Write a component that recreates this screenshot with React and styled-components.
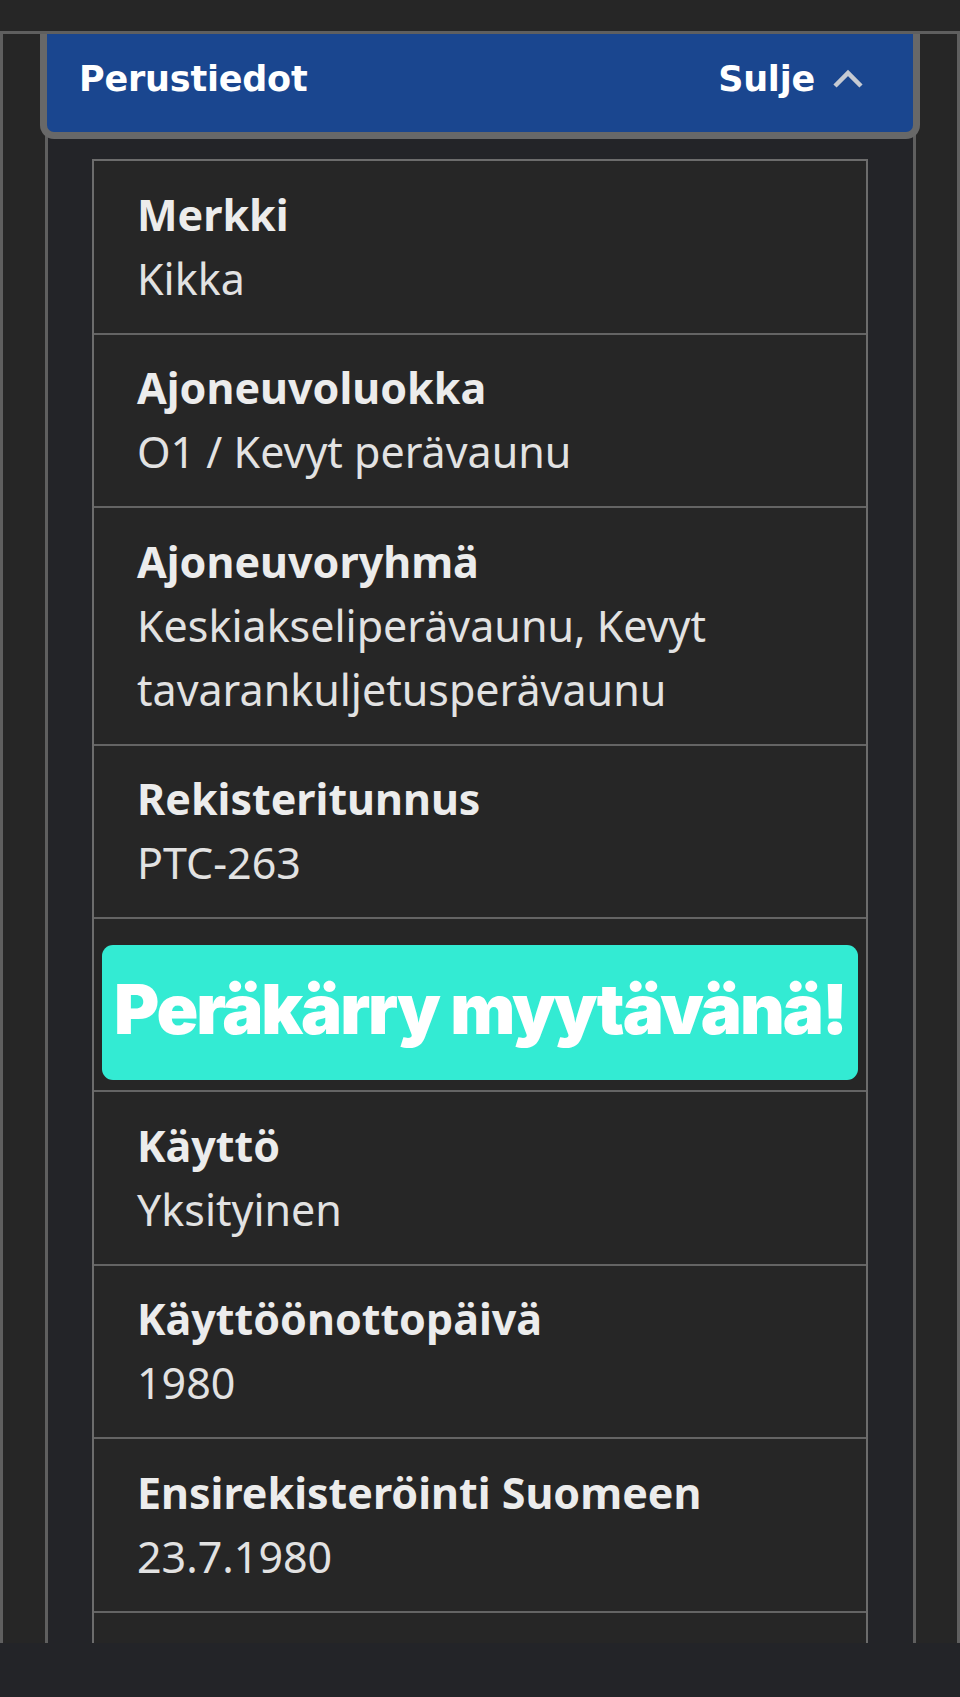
import React from 'react';
import styled, { createGlobalStyle } from 'styled-components';

const GlobalStyle = createGlobalStyle`
  html, body {
    margin: 0;
    padding: 0;
    background-color: #262626;
  }

  body {
    font-family: "Noto Sans", "Open Sans", sans-serif;
    height: 1697px;
    overflow: hidden;
  }
`;

const Page = styled.div`
  position: relative;
  height: 1697px;
  padding-top: 31px;
  box-sizing: border-box;
  overflow: hidden;
`;

const Frame = styled.div`
  border: 3px solid #5f5f5f;
  border-bottom: none;
  background-color: #262626;
  padding: 0 41px 0 42px;
  height: 1700px;
`;

const Column = styled.div`
  border-left: 3px solid #5f5f5f;
  border-right: 3px solid #5f5f5f;
  background-color: #232428;
  height: 100%;
  display: flex;
  flex-direction: column;
`;

const Header = styled.button`
  margin: 0 -7px 0 -8px;
  border: 7px solid #686868;
  border-top: none;
  border-radius: 0 0 14px 14px;
  background-color: #1a468f;
  height: 105px;
  padding: 0 49px 8px 32px;
  display: flex;
  align-items: center;
  justify-content: space-between;
  color: #ffffff;
  font-family: "DejaVu Sans", "Liberation Sans", sans-serif;
  font-weight: 700;
  font-size: 35px;
  letter-spacing: -0.2px;
  cursor: pointer;
`;

const HeaderTitle = styled.span``;

const Toggle = styled.span`
  display: flex;
  align-items: center;
  gap: 17px;
`;

const Table = styled.div`
  margin: 20px 45px 0 44px;
  border: 2px solid #6c6c6c;
  border-bottom: none;
  background-color: #262626;
`;

const Row = styled.div`
  border-bottom: 2px solid #646464;
  padding: ${({ $banner }) => ($banner ? '26px 8px 10px 8px' : '21.5px 43px 22px')};
  color: #e6e6e6;
  font-size: 43px;
  line-height: 64px;
`;

const Label = styled.div`
  font-weight: 700;
  color: #ececec;
`;

const Value = styled.div`
  font-weight: 400;
  color: #e2e2e2;
`;

const Banner = styled.div`
  height: 135px;
  border-radius: 11px;
  background-color: #33ebd3;
  color: #ffffff;
  display: flex;
  align-items: center;
  justify-content: center;
  font-family: "Inter", "Liberation Sans", sans-serif;
  font-weight: 900;
  font-size: 69px;
  letter-spacing: -2.1px;
  line-height: 1;
  padding-bottom: 6px;
  box-sizing: border-box;
`;

const BottomBar = styled.div`
  position: absolute;
  left: 0;
  right: 0;
  bottom: 0;
  height: 54px;
  background-color: #232428;
`;

const rows = [
  { label: 'Merkki', value: 'Kikka' },
  { label: 'Ajoneuvoluokka', value: 'O1 / Kevyt perävaunu' },
  { label: 'Ajoneuvoryhmä', value: 'Keskiakseliperävaunu, Kevyt tavarankuljetusperävaunu' },
  { label: 'Rekisteritunnus', value: 'PTC-263' },
  { banner: 'Peräkärry myytävänä!' },
  { label: 'Käyttö', value: 'Yksityinen' },
  { label: 'Käyttöönottopäivä', value: '1980' },
  { label: 'Ensirekisteröinti Suomeen', value: '23.7.1980' },
  { label: '', value: '' }
];

const Chevron = () => (
  <svg width="32" height="20" viewBox="0 0 32 20" fill="none">
    <polyline points="3,17 16,4 29,17" stroke="#c6cad2" strokeWidth="4.5" />
  </svg>
);

export default function App() {
  return (
    <Page>
      <GlobalStyle />
      <Frame>
        <Column>
          <Header type="button">
            <HeaderTitle>Perustiedot</HeaderTitle>
            <Toggle>
              Sulje
              <Chevron />
            </Toggle>
          </Header>

          <Table>
            {rows.map((row, i) =>
              row.banner ? (
                <Row key={i} $banner>
                  <Banner>{row.banner}</Banner>
                </Row>
              ) : (
                <Row key={i}>
                  <Label>{row.label}</Label>
                  <Value>{row.value}</Value>
                </Row>
              )
            )}
          </Table>
        </Column>
      </Frame>
      <BottomBar />
    </Page>
  );
}
